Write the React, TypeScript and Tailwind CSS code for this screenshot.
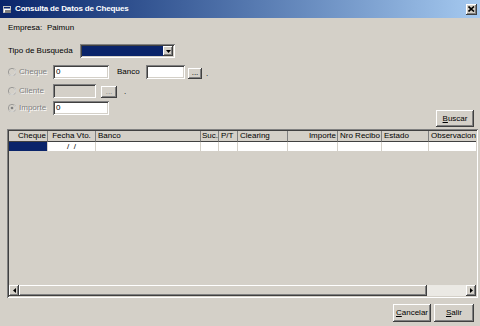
import type { ReactNode } from "react"

const raised =
  "bg-[#d4d0c8] shadow-[inset_-1px_-1px_0_#404040,inset_1px_1px_0_#ffffff,inset_-2px_-2px_0_#808080,inset_2px_2px_0_#d4d0c8]"
const sunken =
  "shadow-[inset_1px_1px_0_#808080,inset_-1px_-1px_0_#ffffff,inset_2px_2px_0_#404040,inset_-2px_-2px_0_#d4d0c8]"

function Radio({ checked }: { checked?: boolean }) {
  return (
    <svg width="8" height="8" viewBox="0 0 12 12" className="shrink-0">
      <circle cx="6" cy="6" r="5.5" fill="#d4d0c8" stroke="#808080" />
      <path d="M2 9.5 A5 5 0 0 0 9.5 9.5 A5 5 0 0 0 9.5 2" fill="none" stroke="#ffffff" />
      {checked && <circle cx="6" cy="6" r="2" fill="#808080" />}
    </svg>
  )
}

function Field({ w, value, disabled }: { w: string; value?: string; disabled?: boolean }) {
  return (
    <div className={`${w} h-[14px] ${disabled ? "bg-[#d4d0c8]" : "bg-white"} ${sunken} flex items-center pl-[3px] text-black`}>
      {value}
    </div>
  )
}

function Dots({ disabled }: { disabled?: boolean }) {
  return (
    <div className={`${raised} flex items-end justify-center pb-[2px] text-[8px] leading-none ${disabled ? "w-[16px] h-[12px] text-[#808080]" : "w-[14px] h-[11px] text-black"}`}>
      ...
    </div>
  )
}

function Label({ children }: { children: ReactNode }) {
  return <span className="inline-block w-[34px] text-[#808080] [text-shadow:1px_1px_0_#ffffff]">{children}</span>
}

const cols: { name: string; w: string; align: string }[] = [
  { name: "Cheque", w: "w-[39px]", align: "justify-end pr-[1px]" },
  { name: "Fecha Vto.", w: "w-[48px]", align: "justify-center" },
  { name: "Banco", w: "w-[105px]", align: "justify-start pl-[2px]" },
  { name: "Suc.", w: "w-[18px]", align: "justify-start pl-[1px]" },
  { name: "P/T", w: "w-[19px]", align: "justify-start pl-[2px]" },
  { name: "Clearing", w: "w-[50px]", align: "justify-start pl-[2px]" },
  { name: "Importe", w: "w-[50px]", align: "justify-end pr-[1px]" },
  { name: "Nro Recibo", w: "w-[44px]", align: "justify-start pl-[2px]" },
  { name: "Estado", w: "w-[47px]", align: "justify-start pl-[2px]" },
  { name: "Observaciones", w: "w-[70px]", align: "justify-start pl-[2px]" },
]

export default function App() {
  return (
    <div className="w-[480px] h-[326px] bg-[#d4d0c8] flex flex-col overflow-hidden whitespace-nowrap font-['Liberation_Sans',Arial,sans-serif] text-[8px] text-black">
      {/* Title bar */}
      <div className="h-[18px] shrink-0 flex items-center bg-gradient-to-r from-[#0a246a] to-[#a6caf0] pl-[3px] pr-[3px]">
        <svg width="9" height="9" viewBox="0 0 9 9" className="shrink-0">
          <rect x="0.5" y="1.5" width="7" height="6" fill="#ffffff" stroke="#c0c0c0" />
          <rect x="1" y="2" width="6" height="1.5" fill="#0a246a" />
          <rect x="2" y="5" width="6" height="3" fill="#808080" />
        </svg>
        <span className="ml-[3px] text-white font-bold text-[8px] tracking-[-0.15px]">Consulta de Datos de Cheques</span>
        <div className={`ml-auto w-[11px] h-[11px] ${raised} flex items-center justify-center`}>
          <svg width="7" height="6" viewBox="0 0 7 6">
            <path d="M0.5 0.5 L6 5.5 M6 0.5 L0.5 5.5" stroke="#000" strokeWidth="1.6" />
          </svg>
        </div>
      </div>

      {/* Form */}
      <div className="pl-[8px] pr-[6px] pt-[4px] flex flex-col">
        <div className="h-[11px] flex items-center">
          <span className="w-[39px]">Empresa:</span>
          <span>Paimun</span>
        </div>
        <div className="mt-[11px] h-[14px] flex items-center">
          <span className="w-[72px]">Tipo de Busqueda</span>
          <div className={`w-[95px] h-[14px] bg-white ${sunken} p-[2px] flex`}>
            <div className="flex-1 bg-[#0a246a]" />
            <div className={`w-[10px] ${raised} flex items-center justify-center`}>
              <svg width="5" height="3" viewBox="0 0 5 3">
                <path d="M0 0 H5 L2.5 3 Z" fill="#000" />
              </svg>
            </div>
          </div>
        </div>

        <div className="mt-[7px] h-[14px] flex items-center">
          <Radio />
          <span className="ml-[3px]"><Label>Cheque</Label></span>
          <Field w="w-[56px]" value="0" />
          <span className="ml-[8px] w-[29px]">Banco</span>
          <Field w="w-[39px]" />
          <div className="ml-[3px] mt-[3px]"><Dots /></div>
          <span className="ml-[4px] mt-[4px]">.</span>
        </div>

        <div className="flex justify-between">
          <div className="flex flex-col pb-[13px]">
            <div className="mt-[5px] h-[14px] flex items-center">
              <Radio />
              <span className="ml-[3px]"><Label>Cliente</Label></span>
              <Field w="w-[43px]" disabled />
              <div className="ml-[5px] mt-[1px]"><Dots disabled /></div>
              <span className="ml-[7px] mt-[2px]">.</span>
            </div>
            <div className="mt-[3px] h-[14px] flex items-center">
              <Radio checked />
              <span className="ml-[3px]"><Label>Importe</Label></span>
              <Field w="w-[56px]" value="0" />
            </div>
          </div>
          <div className={`self-end mb-[1px] w-[38px] h-[17px] ${raised} flex items-center justify-center`}>
            <span><span className="underline">B</span>uscar</span>
          </div>
        </div>
      </div>

      {/* Grid */}
      <div className={`ml-[7px] mt-[1px] w-[471px] h-[169px] ${sunken} p-[2px] flex flex-col`}>
        <div className="flex-1 flex flex-col overflow-hidden">
          <div className="h-[11px] flex shrink-0">
            {cols.map((c) => (
              <div
                key={c.name}
                className={`${c.w} shrink-0 h-full flex items-center overflow-hidden border-r border-b border-r-[#808080] border-b-[#404040] bg-[#d4d0c8] ${c.align}`}
              >
                {c.name}
              </div>
            ))}
          </div>
          <div className="h-[10px] flex shrink-0">
            {cols.map((c, i) => (
              <div
                key={c.name}
                className={`${c.w} shrink-0 h-full flex items-center justify-center whitespace-pre border-r border-b border-[#d4d0c8] ${i === 0 ? "bg-[#0a246a]" : "bg-white"}`}
              >
                {i === 1 ? "/  /" : ""}
              </div>
            ))}
          </div>
          <div className="flex-1" />
        </div>

        {/* Horizontal scrollbar */}
        <div className="h-[11px] shrink-0 flex">
          <div className={`w-[10px] h-full ${raised} flex items-center justify-center`}>
            <svg width="3" height="5" viewBox="0 0 3 5">
              <path d="M3 0 V5 L0 2.5 Z" fill="#000" />
            </svg>
          </div>
          <div className={`w-[408px] h-full ${raised}`} />
          <div className="flex-1 h-full bg-[#ebe9e4]" />
          <div className={`w-[10px] h-full ${raised} flex items-center justify-center`}>
            <svg width="3" height="5" viewBox="0 0 3 5">
              <path d="M0 0 V5 L3 2.5 Z" fill="#000" />
            </svg>
          </div>
        </div>
      </div>

      {/* Buttons */}
      <div className="mt-[6px] flex justify-end gap-[3px] pr-[6px]">
        <div className={`w-[38px] h-[18px] ${raised} flex items-center justify-center`}>
          <span><span className="underline">C</span>ancelar</span>
        </div>
        <div className={`w-[40px] h-[18px] ${raised} flex items-center justify-center`}>
          <span><span className="underline">S</span>alir</span>
        </div>
      </div>
    </div>
  )
}
